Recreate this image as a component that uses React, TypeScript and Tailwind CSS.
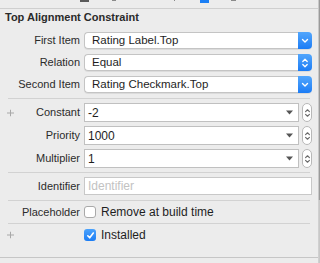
import React from "react";

function ChevDown() {
  return (
    <svg width="8" height="6" viewBox="0 0 8 6" fill="none">
      <path d="M1.5 1.5 L4 4 L6.5 1.5" stroke="white" strokeWidth="1.4" strokeLinecap="round" strokeLinejoin="round" />
    </svg>
  );
}

function ChevUpDown({ color = "white", w = 8 }: { color?: string; w?: number }) {
  return (
    <svg width={w} height="12" viewBox="0 0 8 12" fill="none">
      <path d="M1.8 4.5 L4 2.3 L6.2 4.5" stroke={color} strokeWidth="1.3" strokeLinecap="round" strokeLinejoin="round" />
      <path d="M1.8 7.5 L4 9.7 L6.2 7.5" stroke={color} strokeWidth="1.3" strokeLinecap="round" strokeLinejoin="round" />
    </svg>
  );
}

function Popup({ value, updown }: { value: string; updown?: boolean }) {
  return (
    <div className="flex h-[17px] w-[228px] shadow-[0_1px_0_rgba(0,0,0,0.07)] rounded-[4px]">
      <div className="flex-1 flex items-center rounded-l-[4px] border-y border-l border-[#c4c4c4] bg-white pl-[7px] text-[11.5px] text-[#1e1e1e]">
        {value}
      </div>
      <div className="w-[14px] rounded-r-[4px] bg-gradient-to-b from-[#52a6fc] to-[#1a7cf5] flex items-center justify-center">
        {updown ? <ChevUpDown /> : <ChevDown />}
      </div>
    </div>
  );
}

function Combo({ value }: { value: string }) {
  return (
    <div className="flex items-center">
      <div className="flex items-center h-[19px] w-[215px] border border-[#c0c0c0] bg-white pl-[3px] pr-[3px] text-[12px] text-[#1e1e1e]">
        <span className="flex-1">{value}</span>
        <svg width="7" height="5" viewBox="0 0 7 5" className="mr-[2px]">
          <path d="M0 0.5 H7 L3.5 4.5 Z" fill="#555" />
        </svg>
      </div>
      <div className="ml-[3px] w-[10px] h-[19px] rounded-full border border-[#b8b8b8] bg-white flex items-center justify-center">
        <ChevUpDown color="#6a6a6a" w={7} />
      </div>
    </div>
  );
}

function Plus() {
  return (
    <svg width="7" height="7" viewBox="0 0 7 7" className="absolute left-[7px] top-1/2 -translate-y-1/2">
      <path d="M3.5 0 V7 M0 3.5 H7" stroke="#a8a8a8" strokeWidth="1" />
    </svg>
  );
}

function Row({ label, children, plus, h }: { label: string; children: React.ReactNode; plus?: boolean; h: string }) {
  return (
    <div className={`relative flex items-center ${h}`}>
      {plus && <Plus />}
      <div className="w-[80px] text-right text-[11px] text-[#2b2b2b] pr-0">{label}</div>
      <div className="ml-[4px]">{children}</div>
    </div>
  );
}

function Sep() {
  return <div className="mx-[8px] h-px bg-[#d2d2d2]" />;
}

export default function App() {
  return (
    <div className="w-[320px] h-[263px] bg-[#ececec] flex overflow-hidden font-['Liberation_Sans',Arial,sans-serif]">
      <div className="flex-1 flex flex-col">
        <div className="relative h-[9px] border-b border-[#cfcfcf]">
          <div className="absolute left-[80px] top-0 w-[9px] h-[2px] bg-[#5a5a5a]" />
          <div className="absolute left-[112px] top-0 w-[4px] h-[1px] bg-[#8a8a8a]" />
          <div className="absolute left-[174px] top-0 w-[1px] h-[1px] bg-[#8a8a8a]" />
          <div className="absolute left-[200px] top-0 w-[9px] h-[3px] bg-[#1b7ff5]" />
          <div className="absolute left-[231px] top-0 w-[5px] h-[1px] bg-[#8a8a8a]" />
        </div>
        <div className="h-[17px] leading-[17px] pl-[5px] text-[11px] font-bold text-[#2a2a2a]">
          Top Alignment Constraint
        </div>
        <div className="mt-[6px] flex flex-col gap-[5px]">
          <Row label="First Item" h="h-[17px]"><Popup value="Rating Label.Top" /></Row>
          <Row label="Relation" h="h-[17px]"><Popup value="Equal" updown /></Row>
          <Row label="Second Item" h="h-[17px]"><Popup value="Rating Checkmark.Top" /></Row>
        </div>
        <div className="mt-[5px]"><Sep /></div>
        <div className="mt-[4px] flex flex-col gap-[4px]">
          <Row label="Constant" plus h="h-[19px]"><Combo value="-2" /></Row>
          <Row label="Priority" h="h-[19px]"><Combo value="1000" /></Row>
          <Row label="Multiplier" h="h-[19px]"><Combo value="1" /></Row>
        </div>
        <div className="mt-[4px]"><Sep /></div>
        <div className="mt-[4px]">
          <Row label="Identifier" h="h-[18px]">
            <div className="h-[18px] w-[228px] border border-[#c8c8c8] bg-white pl-[3px] flex items-center text-[12px] text-[#c2c2c2]">
              Identifier
            </div>
          </Row>
        </div>
        <div className="mt-[5px]"><Sep /></div>
        <Row label="Placeholder" h="h-[22px]">
          <div className="flex items-center">
            <div className="w-[12px] h-[12px] rounded-[3px] border border-[#a9a9a9] bg-white" />
            <span className="ml-[5px] text-[12px] text-[#1e1e1e]">Remove at build time</span>
          </div>
        </Row>
        <Sep />
        <Row label="" plus h="h-[22px]">
          <div className="flex items-center">
            <div className="w-[12px] h-[12px] rounded-[3px] bg-gradient-to-b from-[#4aa2fc] to-[#1b7df4] flex items-center justify-center">
              <svg width="9" height="9" viewBox="0 0 9 9" fill="none">
                <path d="M1.8 4.8 L3.7 6.8 L7.3 2" stroke="white" strokeWidth="1.6" strokeLinecap="round" strokeLinejoin="round" />
              </svg>
            </div>
            <span className="ml-[5px] text-[12px] text-[#1e1e1e]">Installed</span>
          </div>
        </Row>
        <div className="mt-[11px] h-px bg-[#c6c6c6]" />
      </div>
      <div className="w-[2px] flex flex-col">
        <div className="w-[2px] h-[200px] border-l border-[#c8c8c8] bg-[#9a9a9a]" />
        <div className="w-[2px] flex-1 border-l border-[#d0d0d0] bg-[#c8c8c8]" />
      </div>
    </div>
  );
}
